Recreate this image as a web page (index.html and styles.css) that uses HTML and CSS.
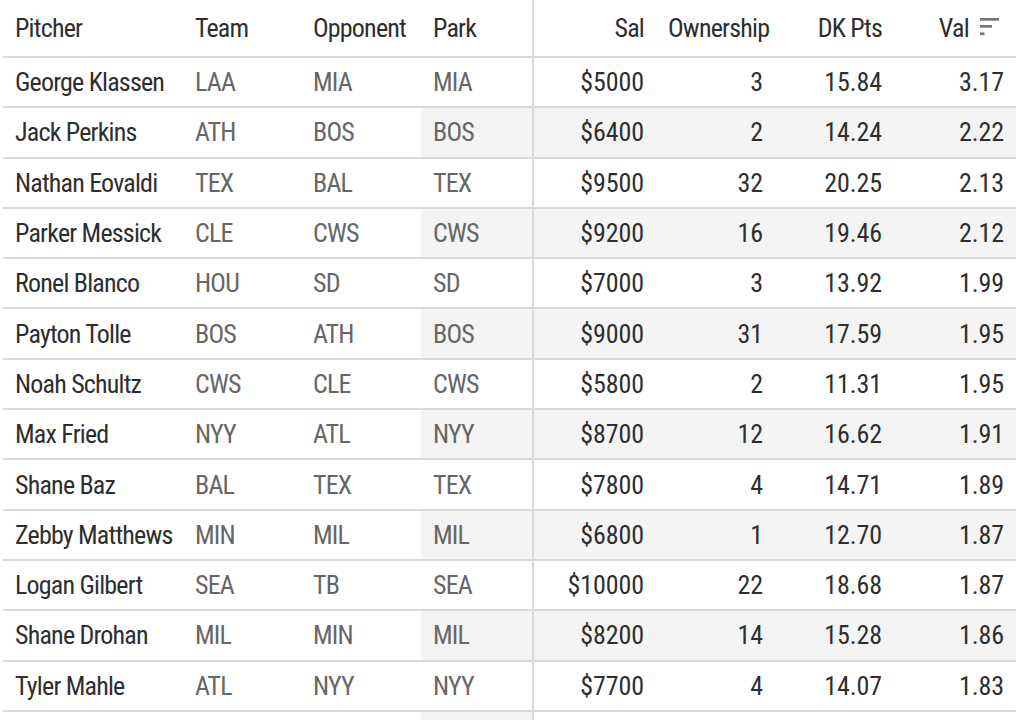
FILE: index.html
```html
<!DOCTYPE html>
<html lang="en">
<head>
<meta charset="utf-8">
<title>Pitchers</title>
<link rel="stylesheet" href="styles.css">
</head>
<body>
<table class="grid">
  <colgroup>
    <col class="c-name"><col class="c-team"><col class="c-opp"><col class="c-park">
    <col class="c-sal"><col class="c-own"><col class="c-pts"><col class="c-val">
  </colgroup>
  <thead>
    <tr>
      <th class="txt">Pitcher</th>
      <th class="txt">Team</th>
      <th class="txt">Opponent</th>
      <th class="txt">Park</th>
      <th class="num split">Sal</th>
      <th class="num">Ownership</th>
      <th class="num">DK Pts</th>
      <th class="num sorted">Val <svg class="sort-icon" width="20" height="18" viewBox="0 0 20 18" aria-hidden="true"><rect x="0" y="0" width="19" height="2.7" /><rect x="0" y="7" width="12" height="2.7" /><rect x="0" y="14.4" width="4.5" height="2.7" /></svg></th>
    </tr>
  </thead>
  <tbody>
    <tr><td class="name">George Klassen</td><td class="abbr">LAA</td><td class="abbr">MIA</td><td class="abbr park">MIA</td><td class="num split">$5000</td><td class="num">3</td><td class="num">15.84</td><td class="num">3.17</td></tr>
    <tr class="alt"><td class="name">Jack Perkins</td><td class="abbr">ATH</td><td class="abbr">BOS</td><td class="abbr park">BOS</td><td class="num split">$6400</td><td class="num">2</td><td class="num">14.24</td><td class="num">2.22</td></tr>
    <tr><td class="name">Nathan Eovaldi</td><td class="abbr">TEX</td><td class="abbr">BAL</td><td class="abbr park">TEX</td><td class="num split">$9500</td><td class="num">32</td><td class="num">20.25</td><td class="num">2.13</td></tr>
    <tr class="alt"><td class="name">Parker Messick</td><td class="abbr">CLE</td><td class="abbr">CWS</td><td class="abbr park">CWS</td><td class="num split">$9200</td><td class="num">16</td><td class="num">19.46</td><td class="num">2.12</td></tr>
    <tr><td class="name">Ronel Blanco</td><td class="abbr">HOU</td><td class="abbr">SD</td><td class="abbr park">SD</td><td class="num split">$7000</td><td class="num">3</td><td class="num">13.92</td><td class="num">1.99</td></tr>
    <tr class="alt"><td class="name">Payton Tolle</td><td class="abbr">BOS</td><td class="abbr">ATH</td><td class="abbr park">BOS</td><td class="num split">$9000</td><td class="num">31</td><td class="num">17.59</td><td class="num">1.95</td></tr>
    <tr><td class="name">Noah Schultz</td><td class="abbr">CWS</td><td class="abbr">CLE</td><td class="abbr park">CWS</td><td class="num split">$5800</td><td class="num">2</td><td class="num">11.31</td><td class="num">1.95</td></tr>
    <tr class="alt"><td class="name">Max Fried</td><td class="abbr">NYY</td><td class="abbr">ATL</td><td class="abbr park">NYY</td><td class="num split">$8700</td><td class="num">12</td><td class="num">16.62</td><td class="num">1.91</td></tr>
    <tr><td class="name">Shane Baz</td><td class="abbr">BAL</td><td class="abbr">TEX</td><td class="abbr park">TEX</td><td class="num split">$7800</td><td class="num">4</td><td class="num">14.71</td><td class="num">1.89</td></tr>
    <tr class="alt"><td class="name">Zebby Matthews</td><td class="abbr">MIN</td><td class="abbr">MIL</td><td class="abbr park">MIL</td><td class="num split">$6800</td><td class="num">1</td><td class="num">12.70</td><td class="num">1.87</td></tr>
    <tr><td class="name">Logan Gilbert</td><td class="abbr">SEA</td><td class="abbr">TB</td><td class="abbr park">SEA</td><td class="num split">$10000</td><td class="num">22</td><td class="num">18.68</td><td class="num">1.87</td></tr>
    <tr class="alt"><td class="name">Shane Drohan</td><td class="abbr">MIL</td><td class="abbr">MIN</td><td class="abbr park">MIL</td><td class="num split">$8200</td><td class="num">14</td><td class="num">15.28</td><td class="num">1.86</td></tr>
    <tr><td class="name">Tyler Mahle</td><td class="abbr">ATL</td><td class="abbr">NYY</td><td class="abbr park">NYY</td><td class="num split">$7700</td><td class="num">4</td><td class="num">14.07</td><td class="num">1.83</td></tr>
    <tr class="alt tail"><td class="name"></td><td class="abbr"></td><td class="abbr"></td><td class="abbr park"></td><td class="num split"></td><td class="num"></td><td class="num"></td><td class="num"></td></tr>
  </tbody>
</table>
</body>
</html>
```

FILE: styles.css
```css
html, body {
  margin: 0;
  padding: 0;
  background: #ffffff;
  overflow: hidden;
}

body {
  font-family: "Roboto Condensed", "Roboto", "DejaVu Sans Condensed", sans-serif;
  font-stretch: condensed;
  color: #333333;
}

.grid {
  margin-left: 3px;
  width: 1013px;
  border-collapse: collapse;
  table-layout: fixed;
  font-size: 26px;
  font-weight: 400;
  letter-spacing: -0.8px;
}

.c-name { width: 180px; }
.c-team { width: 118px; }
.c-opp { width: 120px; }
.c-park { width: 112px; }
.c-sal { width: 123px; }
.c-own { width: 119px; }
.c-pts { width: 119px; }
.c-val { width: 122px; }

.grid th,
.grid td {
  padding: 0 12px;
  border-bottom: 2px solid #d9d9d9;
  white-space: nowrap;
  overflow: hidden;
  line-height: 1;
}

.grid th {
  height: 56px;
  font-weight: 400;
  color: #2e2e2e;
}

.grid td {
  height: 48.3px;
}

.grid .txt { text-align: left; }
.grid .num { text-align: right; }

.grid td.num {
  letter-spacing: -0.1px;
  color: #2e2e2e;
}

.grid .split {
  border-left: 2px solid #d9d9d9;
}

.grid .sorted {
  padding-right: 16px;
}

.sort-icon {
  fill: #777777;
  vertical-align: middle;
  margin-left: 6px;
  position: relative;
  top: -3px;
}

.name { color: #2e2e2e; }
.abbr { color: #666666; }
.park { padding-left: 11px; }

.alt .park,
.alt .num {
  background: #f4f4f4;
}

.tail .num { background: #ffffff; }
```
